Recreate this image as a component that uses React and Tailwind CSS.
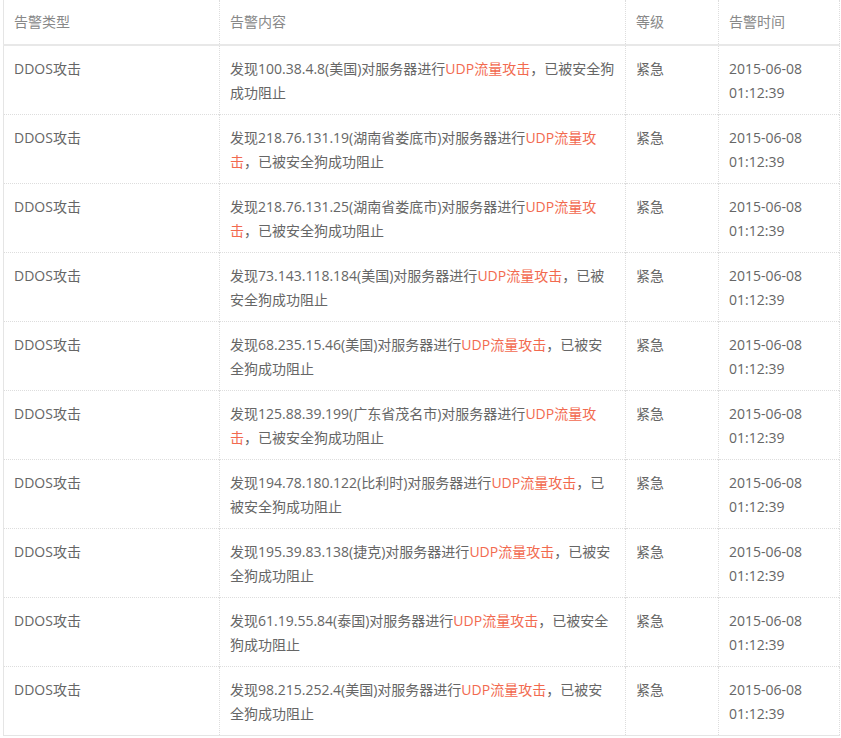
const rows = [
  ["100.38.4.8", "美国"],
  ["218.76.131.19", "湖南省娄底市"],
  ["218.76.131.25", "湖南省娄底市"],
  ["73.143.118.184", "美国"],
  ["68.235.15.46", "美国"],
  ["125.88.39.199", "广东省茂名市"],
  ["194.78.180.122", "比利时"],
  ["195.39.83.138", "捷克"],
  ["61.19.55.84", "泰国"],
  ["98.215.252.4", "美国"],
];
const base = "border-r border-dotted border-r-[#ddd] px-[10px]";
const cell = base + " align-top pt-[11px]";
const head = base + " align-middle";
export default function App() {
  return (
    <div className="w-[841px] h-[738px] bg-white pl-[3px]" style={{ fontFamily: '"Open Sans","Noto Sans CJK SC",sans-serif' }}>
      <table className="border-collapse text-[14px] leading-[24px] text-[#666] table-fixed w-[836px] border-l border-[#e5e5e5] border-b">
        <colgroup>
          <col className="w-[216px]" />
          <col className="w-[406px]" />
          <col className="w-[93px]" />
          <col className="w-[121px]" />
        </colgroup>
        <thead>
          <tr className="h-[45px] border-b-2 border-[#e8e8e8] text-[#888]">
            <td className={head}>告警类型</td>
            <td className={head}>告警内容</td>
            <td className={head}>等级</td>
            <td className={head}>告警时间</td>
          </tr>
        </thead>
        <tbody>
          {rows.map(([ip, loc], i) => (
            <tr key={i} className="h-[69px] border-b border-dotted border-[#ddd]">
              <td className={cell}>DDOS攻击</td>
              <td className={cell}>
                发现{ip}({loc})对服务器进行<span className="text-[#f26a4f]">UDP流量攻击</span>，已被安全狗成功阻止
              </td>
              <td className={cell}>紧急</td>
              <td className={cell}>2015-06-08<br />01:12:39</td>
            </tr>
          ))}
        </tbody>
      </table>
    </div>
  );
}
